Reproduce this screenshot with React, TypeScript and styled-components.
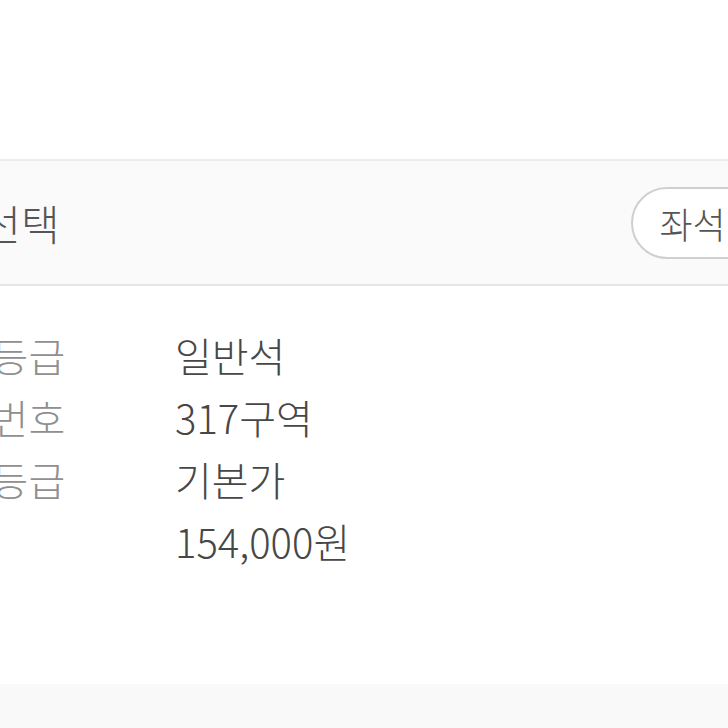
import React from 'react';
import styled, { createGlobalStyle } from 'styled-components';

const GlobalStyle = createGlobalStyle`
    html, body {
        margin: 0;
        padding: 0;
        background: #ffffff;
        overflow: hidden;
    }
    body {
        font-family: 'Noto Sans CJK KR', 'Noto Sans', sans-serif;
    }
`;

const Page = styled.div`
    width: 997px;
    height: 728px;
    margin-left: -120px;
    display: flex;
    flex-direction: column;
`;

const TopSpace = styled.div`
    height: 159px;
`;

const Header = styled.div`
    height: 123px;
    background-color: #fafafa;
    border-top: 2px solid #ececec;
    border-bottom: 2px solid #e6e6e6;
    display: flex;
    align-items: center;
    justify-content: space-between;
    padding: 0 24px 0 25px;
`;

const Title = styled.h2`
    margin: 0;
    font-size: 42px;
    font-weight: 300;
    color: #555555;
`;

const SeatButton = styled.button`
    height: 72px;
    padding: 0 26px;
    border: 2px solid #cfcfcf;
    border-radius: 36px;
    background: #ffffff;
    font-family: inherit;
    font-size: 36px;
    font-weight: 300;
    color: #555555;
    white-space: nowrap;
`;

const Details = styled.dl`
    margin: 0;
    padding: 38px 0 0 38px;
    flex: 1;
`;

const Row = styled.div`
    display: grid;
    grid-template-columns: 257px 1fr;
    line-height: 62px;
    font-size: 40px;
    font-weight: 300;
`;

const Label = styled.dt`
    margin: 0;
    color: #8f8f8f;
`;

const Value = styled.dd`
    margin: 0;
    color: #474747;
`;

const Footer = styled.div`
    height: 44px;
    background-color: #f9f9f9;
`;

const rows = [
    { label: '좌석등급', value: '일반석' },
    { label: '좌석번호', value: '317구역' },
    { label: '가격등급', value: '기본가' },
    { label: '', value: '154,000원' },
];

export default function App() {
    return (
        <>
            <GlobalStyle />
            <Page>
                <TopSpace />
                <Header>
                    <Title>좌석선택</Title>
                    <SeatButton>좌석배치도</SeatButton>
                </Header>
                <Details>
                    {rows.map((r) => (
                        <Row key={r.value}>
                            <Label>{r.label}</Label>
                            <Value>{r.value}</Value>
                        </Row>
                    ))}
                </Details>
                <Footer />
            </Page>
        </>
    );
}
